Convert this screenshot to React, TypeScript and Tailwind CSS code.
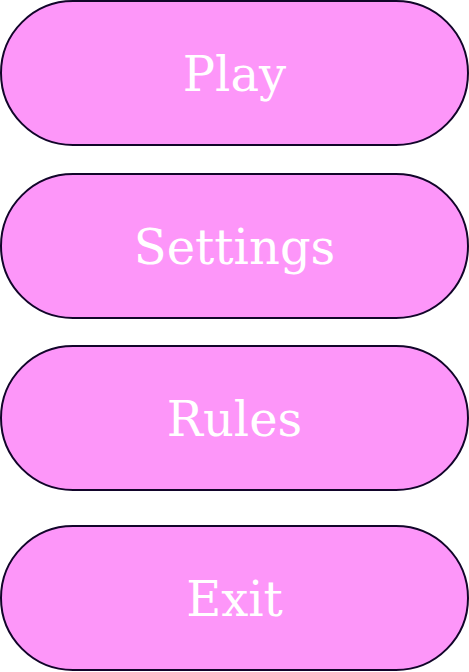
import React from "react";

const Btn = ({ label, className = "" }: { label: string; className?: string }) => (
  <button
    className={`flex h-[146px] w-[469px] items-center justify-center rounded-full border-2 border-[#12052a] bg-[#fd96f9] text-[48px] leading-none text-white ${className}`}
    style={{ fontFamily: '"DejaVu Serif", serif' }}
  >
    <span className="pt-[2px]">{label}</span>
  </button>
);

export default function App() {
  return (
    <div className="flex h-[672px] w-[469px] flex-col bg-white">
      <Btn label="Play" />
      <Btn label="Settings" className="mt-[27px]" />
      <Btn label="Rules" className="mt-[26px]" />
      <Btn label="Exit" className="mt-[34px]" />
    </div>
  );
}
